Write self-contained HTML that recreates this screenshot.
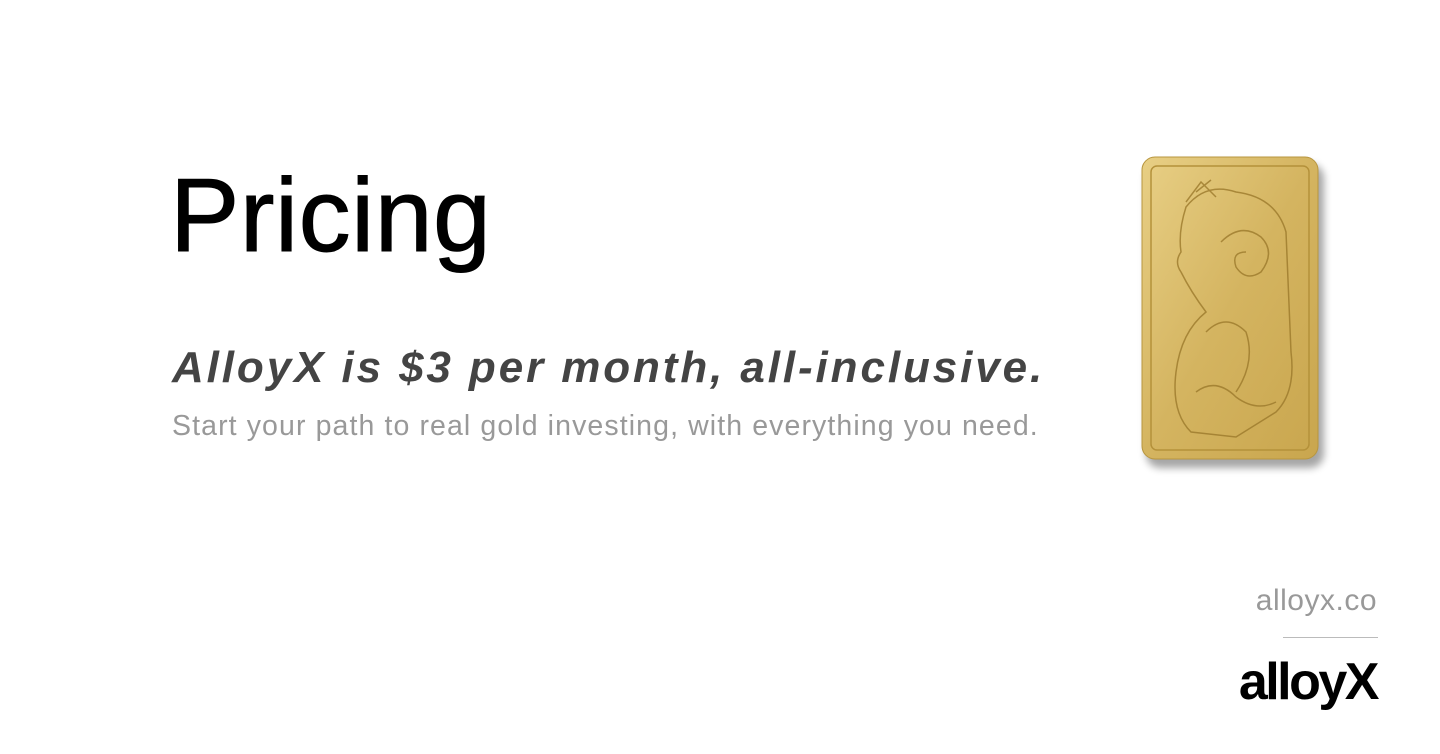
<!DOCTYPE html>
<html><head><meta charset="utf-8"><style>
html,body{margin:0;padding:0;background:#fff;width:1440px;height:754px;overflow:hidden;position:relative;font-family:"Liberation Sans",sans-serif}
.t{position:absolute;white-space:nowrap}
</style></head><body>
<div class="t" style="left:170px;top:164px;font-size:104px;color:#000;line-height:1;letter-spacing:0.5px;-webkit-text-stroke:1px #000">Pricing</div>
<div class="t" style="left:172px;top:346px;font-size:44px;font-weight:bold;font-style:italic;color:#444;line-height:1;letter-spacing:2.9px">AlloyX is $3 per month, all-inclusive.</div>
<div class="t" style="left:172px;top:412px;font-size:28.5px;color:#999;line-height:1;letter-spacing:1.1px">Start your path to real gold investing, with everything you need.</div>
<div class="t" style="right:63px;top:586px;font-size:30px;color:#999;line-height:1;letter-spacing:0.5px">alloyx.co</div>
<div style="position:absolute;left:1283px;top:637px;width:95px;height:1px;background:#bbb"></div>
<div class="t" style="right:63px;top:656px;font-size:52px;font-weight:bold;color:#000;line-height:1;letter-spacing:-2.5px">alloyX</div>
<svg style="position:absolute;left:1136px;top:152px" width="196" height="326" viewBox="0 0 196 326">
<defs>
<linearGradient id="g" x1="0" y1="0" x2="1" y2="1">
<stop offset="0" stop-color="#e8cf85"/><stop offset="0.5" stop-color="#d4b460"/><stop offset="1" stop-color="#c9a64e"/></linearGradient>
<filter id="s" x="-10%" y="-10%" width="130%" height="130%"><feGaussianBlur stdDeviation="4"/></filter>
</defs>
<rect x="10" y="12" width="178" height="304" rx="14" fill="#000" opacity="0.35" filter="url(#s)"/>
<rect x="6" y="5" width="176" height="302" rx="13" fill="url(#g)" stroke="#b8963f"/>
<rect x="15" y="14" width="158" height="284" rx="6" fill="none" stroke="#b4913a" stroke-width="1.5"/>
<g fill="none" stroke="#9c7a2c" stroke-width="1.5" opacity="0.8">
<path d="M50 55 Q70 30 100 40 Q140 45 150 80 L155 200 Q160 240 140 260 L100 285 L55 280 Q35 260 40 220 Q45 180 70 160 Q55 140 45 120 Q38 110 45 100 Q42 80 50 55Z"/>
<path d="M85 90 Q105 70 125 85 Q140 100 125 120 Q110 130 100 115 Q95 100 110 100"/>
<path d="M70 180 Q90 160 110 180 Q120 210 100 240"/>
<path d="M60 240 Q80 225 100 245 Q120 260 140 250"/>
<path d="M50 50 L65 30 L80 45 M60 40 L75 28"/>
</g>
</svg>
</body></html>
